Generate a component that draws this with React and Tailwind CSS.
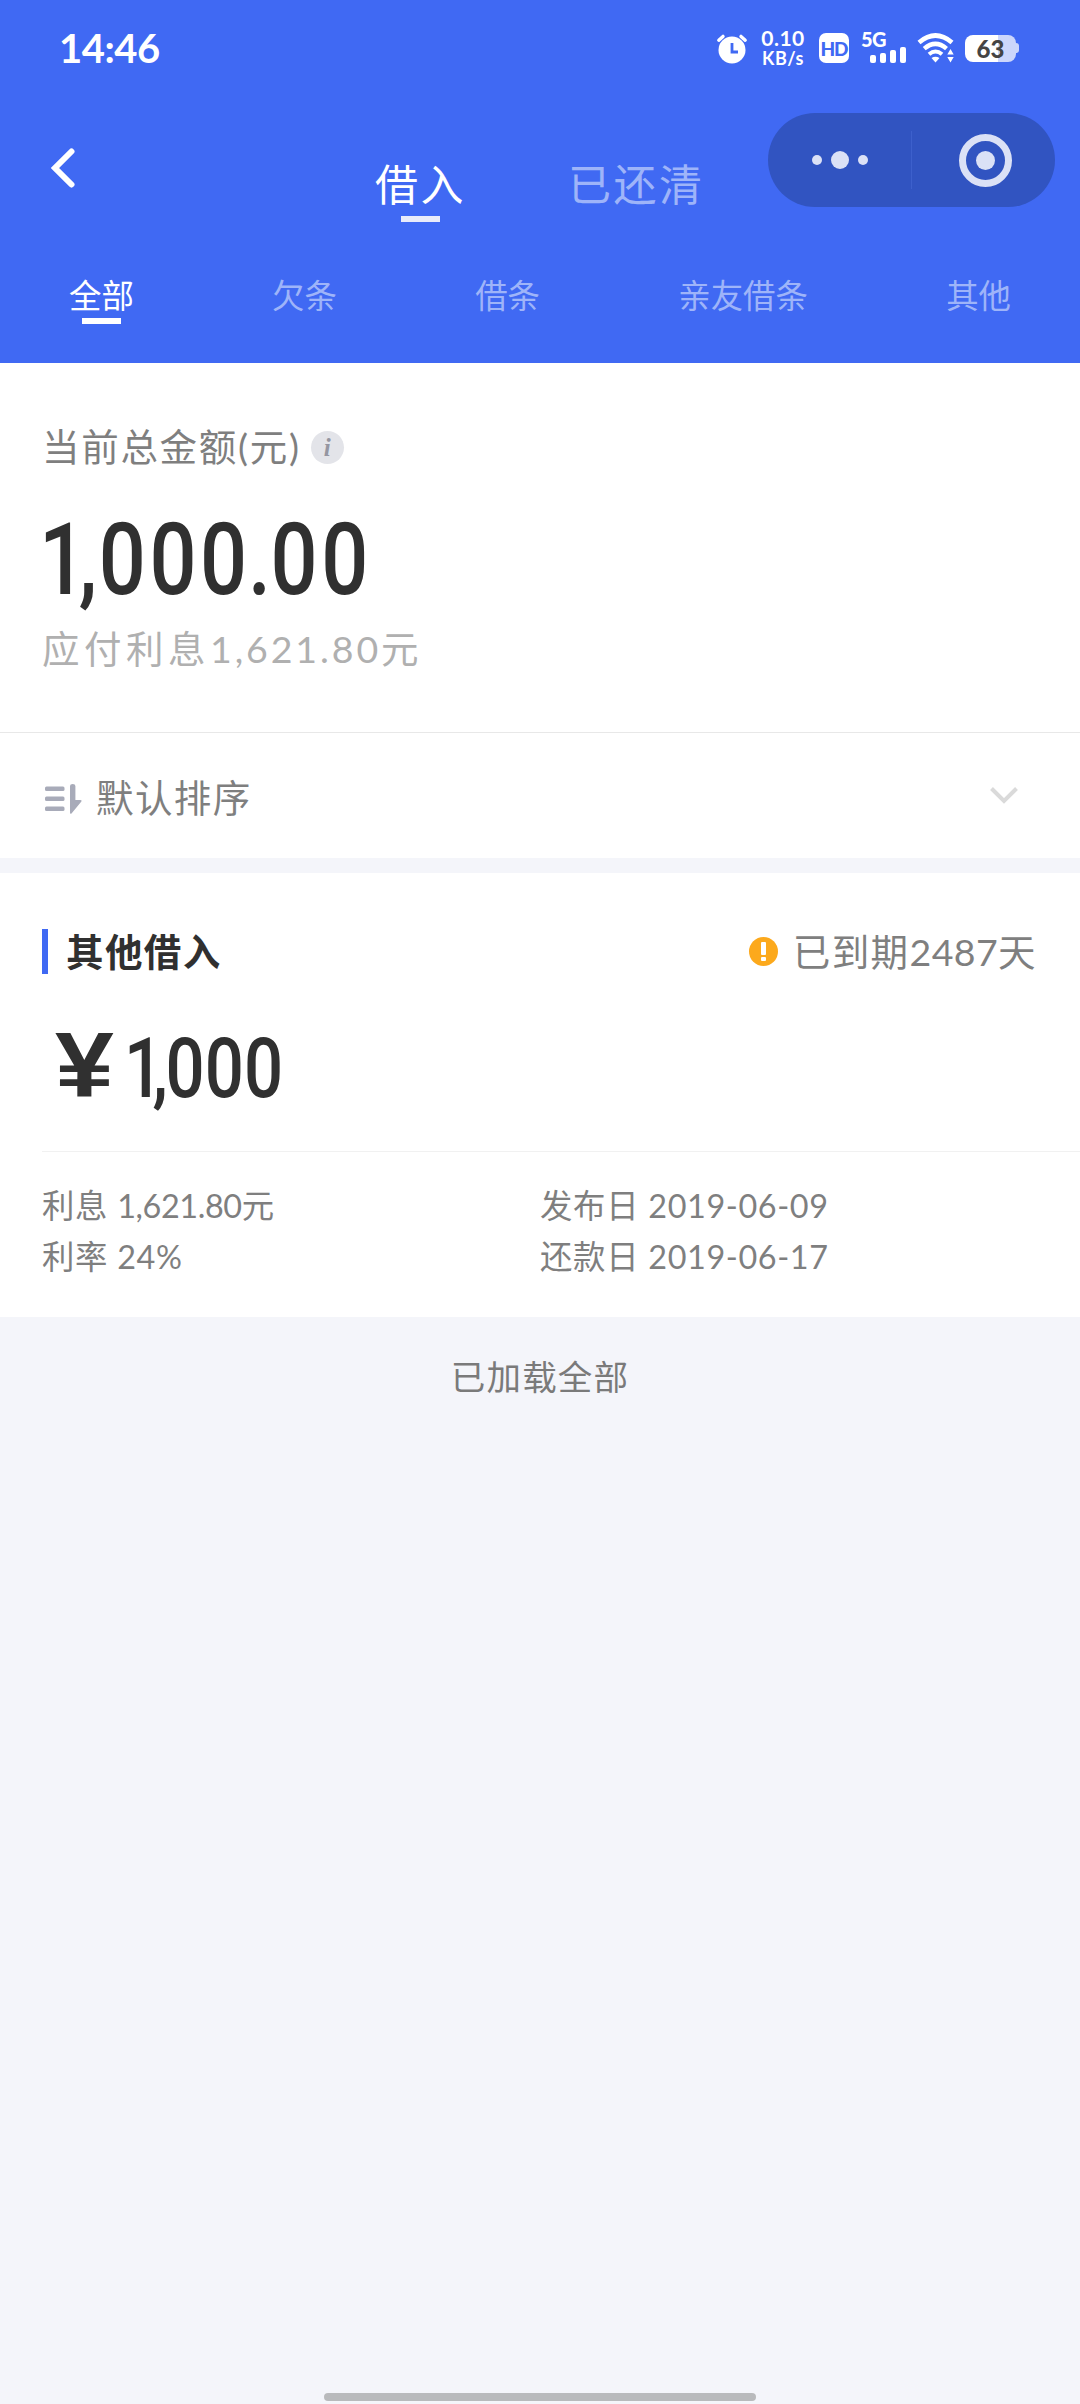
const MAIN_TABS = [
  { key: 'in', label: '借入' },
  { key: 'done', label: '已还清' },
];

const TYPES = ['全部', '欠条', '借条', '亲友借条', '其他'];

const DETAILS = [
  { label: '利息', value: '1,621.80', unit: '元' },
  { label: '发布日', value: '2019-06-09' },
  { label: '利率', value: '24%' },
  { label: '还款日', value: '2019-06-17' },
];

function AlarmIcon() {
  return (
    <svg className="w-[32px] h-[32px]" viewBox="0 0 32 32" fill="none">
      <circle cx="16" cy="18" r="13.5" fill="#fff" />
      <path d="M2.8 8.2 7 4.4M29.2 8.2 25 4.4" stroke="#fff" strokeWidth="3.4" strokeLinecap="round" />
      <path d="M16 11v9h6" stroke="#4069f3" strokeWidth="2.8" />
    </svg>
  );
}

function SignalIcon() {
  return (
    <div className="w-[46px] h-[32px] flex flex-col">
      <span className="text-[20px] leading-[15px] font-black tracking-[-0.5px]">5G</span>
      <div className="flex-1 flex items-end gap-[4px] pl-[9px] pb-[1px]">
        <i className="w-[6px] h-[8px] rounded-[2px] bg-white" />
        <i className="w-[6px] h-[10px] rounded-[2px] bg-white" />
        <i className="w-[6px] h-[13px] rounded-[2px] bg-white" />
        <i className="w-[6px] h-[16px] rounded-[2px] bg-white" />
      </div>
    </div>
  );
}

function WifiIcon() {
  return (
    <svg className="w-[38px] h-[30px]" viewBox="0 0 38 30" fill="none">
      <path d="M2 9.5Q18.5 -4.5 35 9.5" stroke="#fff" strokeWidth="4.6" />
      <path d="M7.2 15.7Q18.5 6 29.5 15.7" stroke="#fff" strokeWidth="4.4" />
      <path d="M12 21.2Q18.5 15.7 25 21.2" stroke="#fff" strokeWidth="4" />
      <path d="M14.5 25q4-2.5 8 0l-4 4.5z" fill="#fff" />
      <path d="M33.5 16l3.2 5.5h-6.4zM33.5 29.5l3.2-5.5h-6.4z" fill="#fff" />
    </svg>
  );
}

function Battery() {
  return (
    <div className="flex items-center">
      <div className="w-[51px] h-[27px] rounded-[8px] bg-linear-to-r from-white from-65% to-[#ccd6fb] to-65% flex items-center justify-center">
        <span className="text-[24px] leading-[27px] font-black text-[#444]">63</span>
      </div>
      <i className="w-[3px] h-[10px] rounded-r-[3px] bg-[#ccd6fb]" />
    </div>
  );
}

function StatusBar() {
  return (
    <div className="h-24 flex items-center justify-between pl-[59px] pr-[61px]">
      <span className="text-[40px] leading-none font-bold tracking-[-0.5px]">14:46</span>
      <div className="flex items-center">
        <AlarmIcon />
        <div className="w-[46px] ml-[12px] flex flex-col items-center font-bold">
          <span className="text-[21px] leading-[20px] tracking-[0.5px]">0.10</span>
          <span className="text-[18px] leading-[20px] tracking-[0.5px]">KB/s</span>
        </div>
        <div className="ml-[13px] w-[30px] h-[30px] rounded-[7px] bg-white text-[#4069f3] flex items-center justify-center">
          <span className="text-[19px] leading-none font-black tracking-[-1px]">HD</span>
        </div>
        <div className="ml-[12px]"><SignalIcon /></div>
        <div className="ml-[10px]"><WifiIcon /></div>
        <div className="ml-[10px]"><Battery /></div>
      </div>
    </div>
  );
}

function Capsule() {
  return (
    <div className="w-[287px] h-[94px] mt-[17px] mr-[25px] ml-auto rounded-full bg-[#3154c1] flex items-center">
      <div className="flex-1 flex items-center justify-center gap-[9px]">
        <i className="w-[10px] h-[10px] rounded-full bg-[#dbe1f6]" />
        <i className="w-[18px] h-[18px] rounded-full bg-[#dbe1f6]" />
        <i className="w-[10px] h-[10px] rounded-full bg-[#dbe1f6]" />
      </div>
      <div className="w-px h-[58px] bg-[#3d60cc]" />
      <div className="flex-1 flex items-center justify-center">
        <div className="w-[53px] h-[53px] mr-[-3px] rounded-full border-[7px] border-[#dbe1f6] flex items-center justify-center">
          <i className="w-[19px] h-[19px] rounded-full bg-[#dbe1f6]" />
        </div>
      </div>
    </div>
  );
}

function Header() {
  return (
    <header className="h-[363px] bg-[#4069f3] text-white">
      <StatusBar />
      <nav className="h-[134px] flex items-start">
        <svg className="w-[26px] h-[40px] ml-[50px] mt-[52px]" viewBox="0 0 26 40" fill="none">
          <path d="M21.5 3.5 5 20l16.5 16.5" stroke="#fff" strokeWidth="6" strokeLinecap="round" />
        </svg>
        <div className="flex gap-[102px] ml-[299px] mt-[61px]">
          {MAIN_TABS.map((t, i) => (
            <div key={t.key} className="flex flex-col items-center">
              <span className={`text-[43px] leading-[56px] tracking-[2.5px] ${i === 0 ? '' : 'text-[#9eb4f9]'}`}>
                {t.label}
              </span>
              {i === 0 && <i className="w-[39px] h-[6px] mt-[3px] bg-[#e8ebfa]" />}
            </div>
          ))}
        </div>
        <Capsule />
      </nav>
      <div className="flex items-start justify-between pt-[47px] px-[69px]">
        {TYPES.map((name, i) => (
          <div key={name} className="flex flex-col items-center">
            <span className={`text-[32.4px] leading-[38px] ${i === 0 ? '' : 'text-[#9eb4f9]'}`}>{name}</span>
            {i === 0 && <i className="w-[39px] h-[6px] mt-[3px] bg-white" />}
          </div>
        ))}
      </div>
    </header>
  );
}

function Summary() {
  return (
    <section className="h-[370px] bg-white border-b border-[#e8e8e8] pt-[59px] pl-[42px]">
      <div className="flex items-center gap-[10px] h-[50px]">
        <span className="text-[37.5px] leading-[50px] tracking-[1.7px] text-[#7f7f7f]">当前总金额(元)</span>
        <i className="w-[33px] h-[33px] rounded-full bg-[#e3e4e9] text-[#9596a1] flex items-center justify-center font-['Liberation_Serif',serif] text-[25px] leading-none font-bold italic">
          i
        </i>
      </div>
      <div className="mt-[43px] ml-[-3px] h-[90px] origin-left scale-x-[0.82] font-[Roboto,sans-serif] text-[101px] leading-[90px] font-medium tracking-[4.3px] text-[#303030]">
        <span className="tracking-[-9px]">1</span>
        <span className="tracking-[2px]">,</span>
        00<span className="tracking-[1px]">0</span>
        <span className="tracking-[-0.5px]">.</span>
        00
      </div>
      <div className="mt-[19px] text-[37.5px] leading-[50px] tracking-[4.5px] text-[#b0b0b0]">
        应付利息<span className="tracking-[2.9px]">1,621.80</span>元
      </div>
    </section>
  );
}

function SortRow() {
  return (
    <section className="h-[125px] bg-white flex items-center pl-[44px] pr-[60px]">
      <svg className="w-[40px] h-[32px] mt-[6px]" viewBox="0 0 40 32" fill="#a8abb9">
        <rect x="1" y="3.5" width="19.5" height="4.4" rx="1.5" />
        <rect x="1" y="13.5" width="19.5" height="4.4" rx="1.5" />
        <rect x="1" y="23.5" width="19.5" height="4.4" rx="1.5" />
        <path d="M26 3q0-2 2.7-2t2.7 2v14h5q2 0 .8 1.8L27.5 30.5Q26 31.5 26 29.5z" />
      </svg>
      <span className="ml-[12px] mt-[4px] text-[37.5px] leading-[50px] tracking-[1.4px] text-[#7f7f7f]">默认排序</span>
      <svg className="w-[32px] h-[20px] ml-auto" viewBox="0 0 32 20" fill="none">
        <path d="M3.5 2.5 16 15 28.5 2.5" stroke="#dadada" strokeWidth="4" />
      </svg>
    </section>
  );
}

function LoanCard() {
  return (
    <section className="h-[444px] mt-[15px] bg-white pt-[56px] pl-[42px]">
      <div className="h-[45px] flex items-center pr-[43px]">
        <i className="w-[6px] h-[45px] bg-[#4069f3]" />
        <span className="ml-[18px] text-[37.5px] leading-[45px] tracking-[1.4px] font-bold text-[#303030]">其他借入</span>
        <i className="w-[29px] h-[29px] ml-auto rounded-full bg-[#fca91c] flex flex-col items-center justify-center gap-[2px]">
          <b className="w-[5px] h-[13px] rounded-[1px] bg-white" />
          <b className="w-[5px] h-[4px] rounded-[1px] bg-white" />
        </i>
        <span className="ml-[15px] text-[37.5px] leading-[45px] tracking-[1.4px] text-[#7f7f7f]">
          已到期<span className="tracking-[0.4px]">2487</span>天
        </span>
      </div>
      <div className="mt-[50px] h-[80px] pl-[13px] flex items-center text-[#303030]">
        <span className="w-[69px] mt-[2px] origin-left scale-x-[1.15] font-['Liberation_Sans',sans-serif] text-[92px] leading-[80px] font-bold">¥</span>
        <span className="mt-[10px] origin-left scale-x-[0.82] font-[Roboto,sans-serif] text-[84px] leading-[80px] font-medium tracking-[0.2px]">
          <span className="tracking-[-13px]">1</span>
          <span className="tracking-[-3px]">,</span>
          000
        </span>
      </div>
      <div className="mt-[47px] border-t border-[#f1f1f1] pt-[28px] grid grid-cols-[498px_1fr]">
        {DETAILS.map(d => (
          <div key={d.label} className="text-[32.4px] leading-[51px] tracking-[0.7px] text-[#7f7f7f]">
            {d.label} <span className={d.unit ? 'tracking-[-0.4px]' : 'tracking-[0.6px]'}>{d.value}</span>
            {d.unit}
          </div>
        ))}
      </div>
    </section>
  );
}

export default function App() {
  return (
    <div className="w-[1080px] h-[2404px] bg-[#f4f5fa] flex flex-col overflow-hidden font-[Lato,'Noto_Sans_CJK_SC',sans-serif] not-italic">
      <Header />
      <Summary />
      <SortRow />
      <LoanCard />
      <p className="mt-[35px] text-center text-[34.5px] leading-[50px] tracking-[1.2px] text-[#7a7a7a]">已加载全部</p>
      <div className="w-[432px] h-[8px] mt-auto mb-[3px] mx-auto rounded-full bg-[#b9babc]" />
    </div>
  );
}
